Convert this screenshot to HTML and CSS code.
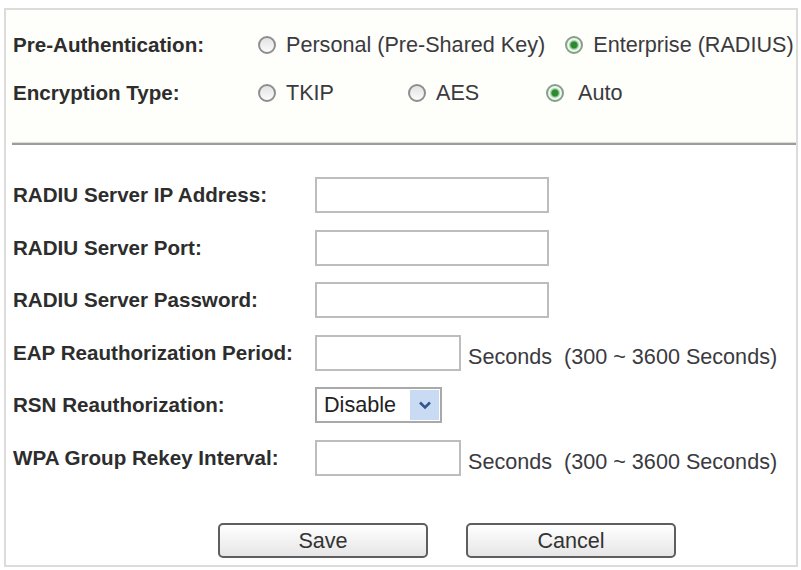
FILE: index.html
```html
<!DOCTYPE html>
<html lang="en">
<head>
    <meta charset="UTF-8">
    <title>Wireless Security - RADIUS</title>
    <link rel="stylesheet" href="styles.css">
</head>
<body>
    <div class="panel">
        <div class="auth">
            <div class="auth-row">
                <span class="label">Pre-Authentication:</span>
                <label class="opt"><span class="radio"></span>Personal (Pre-Shared Key)</label>
                <label class="opt opt-next"><span class="radio checked"></span>Enterprise (RADIUS)</label>
            </div>
            <div class="auth-row enc-row">
                <span class="label">Encryption Type:</span>
                <label class="opt"><span class="radio"></span>TKIP</label>
                <label class="opt"><span class="radio"></span>AES</label>
                <label class="opt opt-auto"><span class="radio checked"></span>Auto</label>
            </div>
        </div>
        <div class="divider"></div>

        <div class="fields">
            <div class="field">
                <span class="label">RADIU Server IP Address:</span>
                <input type="text" class="text-input">
            </div>
            <div class="field">
                <span class="label">RADIU Server Port:</span>
                <input type="text" class="text-input">
            </div>
            <div class="field">
                <span class="label">RADIU Server Password:</span>
                <input type="password" class="text-input">
            </div>
            <div class="field">
                <span class="label">EAP Reauthorization Period:</span>
                <input type="text" class="text-input short">
                <span class="unit">Seconds&nbsp; (300 ~ 3600 Seconds)</span>
            </div>
            <div class="field">
                <span class="label">RSN Reauthorization:</span>
                <div class="select">
                    <span class="select-value">Disable</span>
                    <span class="select-arrow">
                        <svg width="14" height="10" viewBox="0 0 14 10"><path d="M2 2.5 L7 7.5 L12 2.5" fill="none" stroke="#34558f" stroke-width="2.6"/></svg>
                    </span>
                </div>
            </div>
            <div class="field">
                <span class="label">WPA Group Rekey Interval:</span>
                <input type="text" class="text-input short">
                <span class="unit">Seconds&nbsp; (300 ~ 3600 Seconds)</span>
            </div>
        </div>

        <div class="actions">
            <button type="button" class="btn">Save</button>
            <button type="button" class="btn">Cancel</button>
        </div>
    </div>
</body>
</html>
```

FILE: styles.css
```css
* {
    box-sizing: border-box;
    font-family: "Liberation Sans", Arial, sans-serif;
}
body {
    margin: 0;
    background-color: #fff;
    color: #333;
}
.panel {
    margin: 8px 0 0 4px;
    width: 794px;
    border: 2px solid #dcdcdc;
    background-color: #fff;
}
.auth {
    background-color: #fefefa;
    padding: 11px 0 26px 7px;
}
.auth-row {
    display: flex;
    align-items: center;
    height: 48px;
    font-size: 21.6px;
}
.label {
    font-weight: bold;
    font-size: 20.6px;
    color: #2d2d2d;
    flex: none;
}
.auth .label {
    width: 245px;
}
.opt {
    display: flex;
    align-items: center;
    color: #3a3a40;
    white-space: nowrap;
}
.radio {
    flex: none;
    width: 18px;
    height: 18px;
    margin-right: 10px;
    border: 2px solid #8e8e8e;
    border-radius: 50%;
    background: linear-gradient(#e2e2e2, #fbfbfb);
}
.radio.checked {
    border-color: #84a088;
    background: radial-gradient(circle, #2c8a33 0 3px, #8acb8d 4px, #f2f5f2 5.5px);
}
.opt-next {
    margin-left: 20px;
}
.enc-row .opt {
    width: 150px;
}
.enc-row .opt + .opt {
    width: 135px;
}
.enc-row .opt-auto {
    width: auto;
    padding-left: 3px;
}
.enc-row .opt-auto .radio {
    margin-right: 14px;
}
.divider {
    height: 2px;
    margin-left: 6px;
    background-color: #9c9c9c;
    box-shadow: 0 -1px 1px #dcdcd6;
}
.fields {
    display: flex;
    flex-direction: column;
    gap: 16.5px;
    padding: 32px 0 0 7px;
}
.field {
    display: flex;
    align-items: center;
    height: 36px;
    font-size: 21.6px;
}
.fields .label {
    width: 302px;
}
.text-input {
    width: 234px;
    height: 36px;
    margin: 0;
    border: 2px solid #bdbdbd;
    background-color: #fff;
}
.text-input.short {
    width: 146px;
}
.unit {
    margin-left: 7px;
    padding-top: 9px;
    color: #3a3a40;
    white-space: nowrap;
}
.select {
    display: flex;
    align-items: stretch;
    width: 127px;
    height: 36px;
    border: 2px solid #a9a9a9;
    padding: 1px;
    background-color: #fff;
}
.select-value {
    flex: 1;
    display: flex;
    align-items: center;
    padding-left: 6px;
    color: #222;
}
.select-arrow {
    width: 29px;
    display: flex;
    align-items: center;
    justify-content: center;
    background-color: #c9dbf3;
}
.actions {
    display: flex;
    gap: 38px;
    padding: 47.5px 0 7px 212px;
}
.btn {
    width: 210px;
    height: 35px;
    border: 2px solid #5e5e5e;
    border-radius: 5px;
    background: linear-gradient(#ffffff, #e6e6e6);
    font-size: 21.6px;
    color: #333;
    padding: 0;
}
```
